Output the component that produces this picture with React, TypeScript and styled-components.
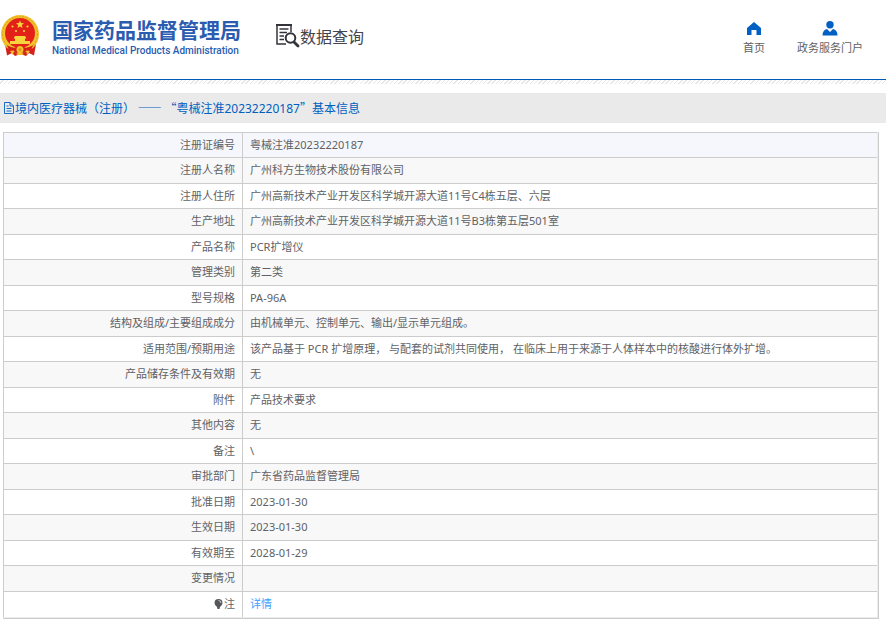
import React from "react";
import styled, { createGlobalStyle } from "styled-components";

const GlobalStyle = createGlobalStyle`
  * { box-sizing: border-box; }
  body {
    margin: 0;
    background: #fff;
    color: #606266;
    font-family: "Noto Sans", "Noto Sans CJK SC", sans-serif;
    font-size: 11px;
  }
`;

const Header = styled.header`
  display: flex;
  align-items: flex-start;
  height: 80px;
  border-bottom: 1px solid #0059b3;
`;

const Brand = styled.a`
  display: flex;
  align-items: center;
  gap: 11px;
  margin-top: 13px;
  color: #2b5cb0;
  text-decoration: none;
`;

const BrandText = styled.span`
  display: flex;
  flex-direction: column;
  padding-top: 2px;
`;

const BrandName = styled.strong`
  font-family: "Noto Sans CJK SC", sans-serif;
  font-size: 21px;
  line-height: 29px;
  font-weight: 700;
  white-space: nowrap;
`;

const BrandEnglish = styled.span`
  font-family: Roboto, sans-serif;
  font-size: 10px;
  font-weight: 500;
  line-height: 14px;
  white-space: nowrap;
`;

const Section = styled.div`
  display: flex;
  align-items: center;
  margin: 23px 0 0 34px;
  color: #44444c;
  font-family: "Noto Sans CJK SC", sans-serif;
  font-size: 16px;
  font-weight: 400;
  line-height: 24px;
  white-space: nowrap;
`;

const Nav = styled.nav`
  display: flex;
  gap: 32px;
  margin: 20px 23px 0 auto;
`;

const NavLink = styled.a`
  display: flex;
  flex-direction: column;
  align-items: center;
  color: #606266;
  line-height: 20px;
  text-decoration: none;
  white-space: nowrap;

  svg { color: #0060c4; }
`;

const Hatch = styled.div`
  height: 4px;
  background: repeating-linear-gradient(135deg, #fff 0 2px, #e6e6e6 2px 3px);
`;

const TitleBar = styled.h1`
  display: flex;
  align-items: center;
  gap: 1px;
  height: 30px;
  margin: 9px 0;
  padding-left: 4px;
  background: #eaeaea;
  color: #0060c0;
  font-size: 12px;
  font-weight: 400;
  white-space: pre;
`;

const WidePunctuation = styled.span`
  font-family: "Noto Sans CJK SC", sans-serif;
`;

const TableFrame = styled.div`
  margin: 0 7px 0 3px;
  padding: 0 1px 1px 0;
  border: solid #ccc;
  border-width: 0 1px 1px 0;
  background: #ececec;
`;

const Table = styled.table`
  width: 100%;
  border-spacing: 0;
  border-left: 1px solid #ccc;
  background: #fff;
  line-height: 16px;
`;

const Label = styled.th`
  width: 239px;
  padding: 0 7px;
  border: solid #ccc;
  border-width: 1px 1px 0 0;
  font-weight: 400;
  text-align: right;
  white-space: nowrap;
`;

const Value = styled.td`
  padding: 0 7px;
  border-top: 1px solid #ccc;
`;

const Row = styled.tr<{ $active?: boolean }>`
  height: 25px;
  background: ${(p) => (p.$active ? "#f5f7fc" : "#fff")};

  &:nth-child(even) {
    height: 26px;
    background: #f8f8f8;
  }

  &:nth-child(even) > *,
  &:last-child > * {
    padding-bottom: 1px;
  }

  &:last-child { height: 26px; }
`;

const DetailLink = styled.a`
  color: #409eff;
  text-decoration: none;
`;

const Emblem = () => (
  <svg width="41" height="43" viewBox="0 0 41 43" aria-hidden="true">
    <path d="M5 30L7 41.500L12 39L15 42L20.500 40L26 42L29 39L34 41.500L36 30Z" fill="#d5201c" />
    <circle cx="20" cy="20" r="19" fill="#f2c12e" />
    <circle cx="20" cy="20" r="17.500" fill="none" stroke="#dda21b" strokeWidth="1" strokeDasharray="2 1.500" />
    <circle cx="20" cy="19" r="15" fill="#e32119" />
    <path d="M20 6.500l1.100 2.600 2.900.2-2.200 1.800.7 2.800-2.500-1.500-2.500 1.500.7-2.800-2.200-1.800 2.900-.2z" fill="#f8d43c" />
    <g fill="#f8d43c">
      <circle cx="12.500" cy="12.500" r="1.100" /><circle cx="27.500" cy="12.500" r="1.100" />
      <circle cx="16" cy="17" r="1.100" /><circle cx="24" cy="17" r="1.100" />
      <path d="M15 22H25L26.500 24.500H25V27H30V30H10V27H15V24.500H13.500Z" />
    </g>
    <path d="M7 31Q14 35 16 33Q20 31 24 33Q26 35 33 31L31 37Q26 36 24 39L20 37L16 39Q14 36 9 37Z" fill="#d5201c" />
    <circle cx="20" cy="35.500" r="3.500" fill="#f2c12e" />
    <circle cx="20" cy="35.500" r="1.500" fill="#d99a18" />
    <path d="M10 37L14 36.500L13 41ZM30 37L26 36.500L27 41ZM16 40Q20 37.500 24 40L22 41H18Z" fill="#f2c12e" />
  </svg>
);

const QueryIcon = () => (
  <svg width="25" height="25" viewBox="0 0 25 25" fill="none" stroke="#33333b" aria-hidden="true">
    <path d="M11 21H2V2H16V9" strokeWidth="1.500" />
    <path d="M1 2H17" strokeWidth="2" />
    <path d="M4.500 6H13.500M4.500 9.500H12M4.500 13H9M4.500 16.500H9" strokeWidth="1.300" />
    <circle cx="15.500" cy="15" r="4.800" strokeWidth="2" />
    <path d="M19 19L23 23" strokeWidth="2.800" strokeLinecap="round" />
  </svg>
);

const HomeIcon = () => (
  <svg width="16" height="18" viewBox="0 0 16 18" fill="currentColor" aria-hidden="true">
    <path d="M8 2L1 8V15H5.500V10H10.500V15H15V8Z" />
  </svg>
);

const PersonIcon = () => (
  <svg width="16" height="18" viewBox="0 0 16 18" fill="currentColor" aria-hidden="true">
    <circle cx="8" cy="4.800" r="3.700" />
    <path d="M.5 15.500Q.5 10 5 9L8 12L11 9Q15.500 10 15.500 15.500Z" />
  </svg>
);

const DocumentIcon = () => (
  <svg width="10" height="12" viewBox="0 0 10 12" fill="none" stroke="currentColor" aria-hidden="true">
    <path d="M.5 .5H6L9.500 4V11.500H.5ZM6 .5V4H9.500M2.500 4H4.500M2.500 6.500H7.500M2.500 9H7.500" strokeWidth=".9" />
  </svg>
);

const BulbIcon = styled(({ className }: { className?: string }) => (
  <svg className={className} width="9" height="10" viewBox="0 0 9 10" aria-hidden="true">
    <path d="M4.500 0A4 4 0 0 1 8.500 4Q8.500 6 6 8L5.500 10H3.500L3 8Q.5 6 .5 4A4 4 0 0 1 4.500 0Z" fill="#55575b" />
    <path d="M4.500 1.500Q6.800 1.500 7 4" fill="none" stroke="#fff" strokeWidth=".7" />
  </svg>
))`
  margin-right: 1px;
  vertical-align: -1px;
`;

const records: [string, string][] = [
  ["注册证编号", "粤械注准20232220187"],
  ["注册人名称", "广州科方生物技术股份有限公司"],
  ["注册人住所", "广州高新技术产业开发区科学城开源大道11号C4栋五层、六层"],
  ["生产地址", "广州高新技术产业开发区科学城开源大道11号B3栋第五层501室"],
  ["产品名称", "PCR扩增仪"],
  ["管理类别", "第二类"],
  ["型号规格", "PA-96A"],
  ["结构及组成/主要组成成分", "由机械单元、控制单元、输出/显示单元组成。"],
  ["适用范围/预期用途", "该产品基于 PCR 扩增原理， 与配套的试剂共同使用， 在临床上用于来源于人体样本中的核酸进行体外扩增。"],
  ["产品储存条件及有效期", "无"],
  ["附件", "产品技术要求"],
  ["其他内容", "无"],
  ["备注", "\\"],
  ["审批部门", "广东省药品监督管理局"],
  ["批准日期", "2023-01-30"],
  ["生效日期", "2023-01-30"],
  ["有效期至", "2028-01-29"],
  ["变更情况", ""],
];

export default function App() {
  return (
    <>
      <GlobalStyle />
      <Header>
        <Brand href="#">
          <Emblem />
          <BrandText>
            <BrandName>国家药品监督管理局</BrandName>
            <BrandEnglish>National Medical Products Administration</BrandEnglish>
          </BrandText>
        </Brand>
        <Section>
          <QueryIcon />
          数据查询
        </Section>
        <Nav>
          <NavLink href="#"><HomeIcon />首页</NavLink>
          <NavLink href="#"><PersonIcon />政务服务门户</NavLink>
        </Nav>
      </Header>
      <Hatch />
      <main>
        <TitleBar>
          <DocumentIcon />
          <span lang="zh-CN">
            境内医疗器械（注册）
            <WidePunctuation> —— “</WidePunctuation>
            粤械注准20232220187
            <WidePunctuation>”</WidePunctuation>
            基本信息
          </span>
        </TitleBar>
        <TableFrame>
          <Table>
            <tbody>
              {records.map(([label, value], i) => (
                <Row key={label} $active={i === 0}>
                  <Label scope="row">{label}</Label>
                  <Value>{value}</Value>
                </Row>
              ))}
              <Row>
                <Label scope="row"><BulbIcon />注</Label>
                <Value><DetailLink href="#">详情</DetailLink></Value>
              </Row>
            </tbody>
          </Table>
        </TableFrame>
      </main>
    </>
  );
}
